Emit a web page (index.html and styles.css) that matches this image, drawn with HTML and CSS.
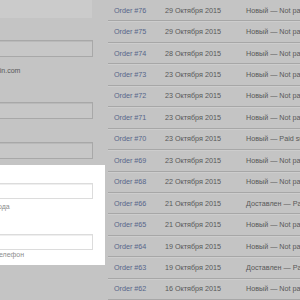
FILE: index.html
```html
<!DOCTYPE html>
<html lang="ru">
<head>
    <meta charset="UTF-8">
    <title>Orders</title>
    <link rel="stylesheet" href="styles.css">
</head>
<body>
    <div class="page">
        <aside class="sidebar">
            <div class="summary"></div>
            <div class="input"></div>
            <p class="hint">admin@admin.com</p>
            <div class="input gap-lg"></div>
            <div class="input gap-md"></div>

            <div class="panel">
                <div class="input"></div>
                <p class="hint">Код города</p>
                <div class="input gap-md"></div>
                <p class="hint last">Телефон</p>
            </div>
        </aside>

        <main class="orders">
            <div class="row"><a href="#">Order #76</a><span class="date">29 Октября 2015</span><span class="status">Новый — Not paid</span></div>
            <div class="row"><a href="#">Order #75</a><span class="date">29 Октября 2015</span><span class="status">Новый — Not paid</span></div>
            <div class="row"><a href="#">Order #74</a><span class="date">28 Октября 2015</span><span class="status">Новый — Not paid</span></div>
            <div class="row"><a href="#">Order #73</a><span class="date">23 Октября 2015</span><span class="status">Новый — Not paid</span></div>
            <div class="row"><a href="#">Order #72</a><span class="date">23 Октября 2015</span><span class="status">Новый — Not paid</span></div>
            <div class="row"><a href="#">Order #71</a><span class="date">23 Октября 2015</span><span class="status">Новый — Not paid</span></div>
            <div class="row"><a href="#">Order #70</a><span class="date">23 Октября 2015</span><span class="status">Новый — Paid successfully</span></div>
            <div class="row"><a href="#">Order #69</a><span class="date">23 Октября 2015</span><span class="status">Новый — Not paid</span></div>
            <div class="row"><a href="#">Order #68</a><span class="date">22 Октября 2015</span><span class="status">Новый — Not paid</span></div>
            <div class="row"><a href="#">Order #66</a><span class="date">21 Октября 2015</span><span class="status">Доставлен — Paid</span></div>
            <div class="row"><a href="#">Order #65</a><span class="date">21 Октября 2015</span><span class="status">Новый — Not paid</span></div>
            <div class="row"><a href="#">Order #64</a><span class="date">19 Октября 2015</span><span class="status">Новый — Not paid</span></div>
            <div class="row"><a href="#">Order #63</a><span class="date">19 Октября 2015</span><span class="status">Доставлен — Paid</span></div>
            <div class="row"><a href="#">Order #62</a><span class="date">16 Октября 2015</span><span class="status">Новый — Not paid</span></div>
        </main>
    </div>
</body>
</html>
```

FILE: styles.css
```css
body {
    margin: 0;
    background-color: #c4c4c4;
    font-family: "Liberation Sans", Arial, sans-serif;
    overflow: hidden;
}
.page {
    display: flex;
    width: 300px;
    height: 300px;
    overflow: hidden;
}
.sidebar {
    width: 105px;
    flex-shrink: 0;
    display: flex;
    flex-direction: column;
}
.summary {
    height: 18px;
    margin-right: 13px;
    background-color: #cbcbcb;
}
.input {
    height: 17px;
    margin-top: 22px;
    margin-left: -60px;
    margin-right: 12px;
    border: 1px solid #a8a8a8;
    background-color: #c7c7c7;
    box-shadow: inset 0 1px 0 #b9b9b9;
    box-sizing: border-box;
}
.gap-lg {
    margin-top: 26px;
}
.gap-md {
    margin-top: 23px;
}
.hint {
    margin: 9px 0 0 -40px;
    font-size: 7px;
    line-height: 10px;
    color: #585858;
    white-space: nowrap;
}
.panel {
    margin-top: 6px;
    height: 100px;
    padding-top: 18px;
    background-color: #fff;
    box-sizing: border-box;
    display: flex;
    flex-direction: column;
}
.panel .input {
    margin-top: 0;
    height: 16px;
    border-color: #dcdcdc;
    background-color: #fff;
    box-shadow: inset 0 1px 0 #efefef;
}
.panel .input.gap-md {
    margin-top: 22px;
}
.panel .hint {
    margin: 3px 0 0 -26px;
    font-size: 7px;
    color: #8c8c8c;
}
.panel .hint.last {
    margin-top: 0;
    margin-left: -5px;
}
.orders {
    flex: 1;
    margin-left: 3px;
    min-width: 0;
}
.row {
    display: flex;
    align-items: center;
    height: 21.45px;
    padding-left: 6px;
    border-bottom: 1px solid #a7a7a7;
    box-shadow: 0 1px 0 #cdcdcd;
    box-sizing: border-box;
    font-size: 7.2px;
    white-space: nowrap;
    color: #585858;
}
.row a {
    width: 51px;
    flex-shrink: 0;
    color: #56658a;
    text-decoration: none;
}
.date {
    width: 81px;
    flex-shrink: 0;
}
.status {
    flex-shrink: 0;
}
```
